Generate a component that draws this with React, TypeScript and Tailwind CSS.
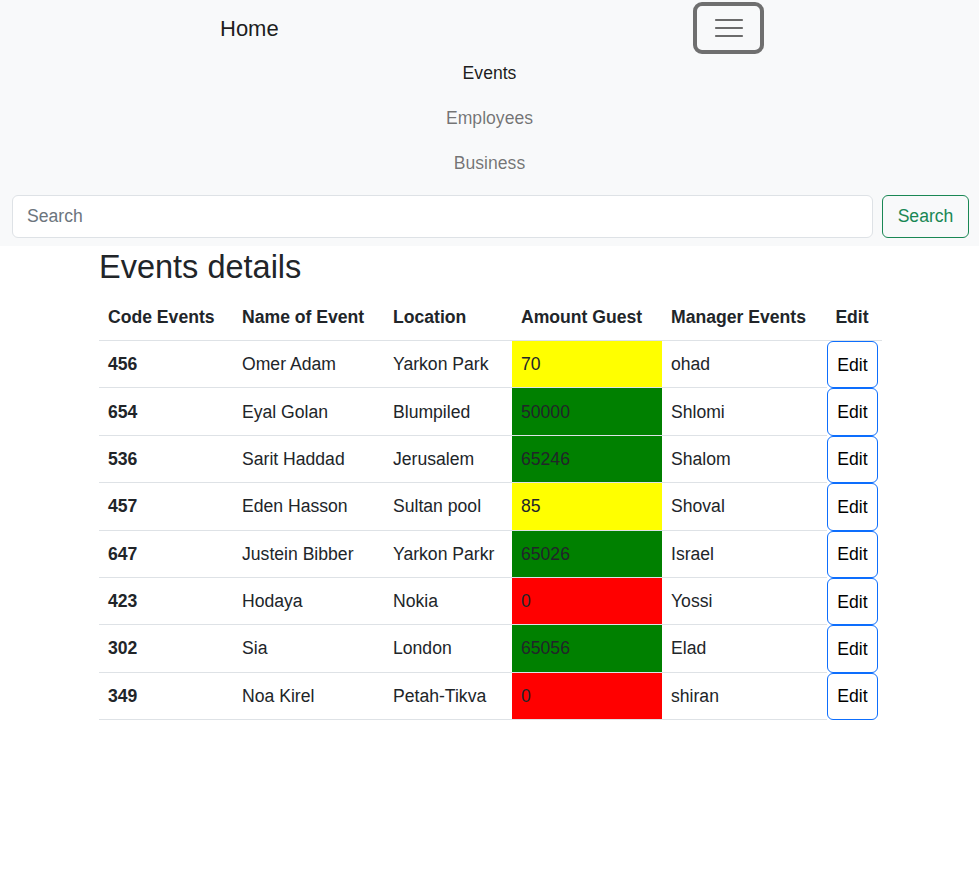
import React from "react";

const rows = [
  { code: "456", name: "Omer Adam", loc: "Yarkon Park", amount: "70", color: "bg-[#ffff00]", mgr: "ohad" },
  { code: "654", name: "Eyal Golan", loc: "Blumpiled", amount: "50000", color: "bg-[#008000]", mgr: "Shlomi" },
  { code: "536", name: "Sarit Haddad", loc: "Jerusalem", amount: "65246", color: "bg-[#008000]", mgr: "Shalom" },
  { code: "457", name: "Eden Hasson", loc: "Sultan pool", amount: "85", color: "bg-[#ffff00]", mgr: "Shoval" },
  { code: "647", name: "Justein Bibber", loc: "Yarkon Parkr", amount: "65026", color: "bg-[#008000]", mgr: "Israel" },
  { code: "423", name: "Hodaya", loc: "Nokia", amount: "0", color: "bg-[#ff0000]", mgr: "Yossi" },
  { code: "302", name: "Sia", loc: "London", amount: "65056", color: "bg-[#008000]", mgr: "Elad" },
  { code: "349", name: "Noa Kirel", loc: "Petah-Tikva", amount: "0", color: "bg-[#ff0000]", mgr: "shiran" },
];

const cols = ["w-[134px]", "w-[151px]", "w-[128px]", "w-[150px]", "w-[165px]"];

export default function App() {
  return (
    <div className="min-h-[889px] bg-white text-[#212529] font-['Liberation_Sans',Arial,sans-serif] text-[17.6px]">
      <nav className="bg-[#f8f9fa] pb-[8px]">
        <div className="flex items-center justify-between pl-[220px] pr-[215px] h-[56px]">
          <span className="text-[22px] text-[rgba(0,0,0,0.9)]">Home</span>
          <button className="w-[71px] h-[52px] mt-[2px] self-start rounded-[9px] border-[4px] border-[#6f6f6f] flex items-center justify-center">
            <svg width="30" height="24" viewBox="0 0 30 24">
              <path d="M2 4h26M2 12h26M2 20h26" stroke="#6b6b6b" strokeWidth="2.2" strokeLinecap="round" />
            </svg>
          </button>
        </div>
        <ul className="flex flex-col items-center">
          <li className="h-[45px] flex items-center text-[rgba(0,0,0,0.9)] -mt-[5px]">Events</li>
          <li className="h-[45px] flex items-center text-[rgba(0,0,0,0.55)]">Employees</li>
          <li className="h-[45px] flex items-center text-[rgba(0,0,0,0.55)]">Business</li>
        </ul>
        <div className="flex gap-[9px] pl-[12px] pr-[10px] mt-[9px]">
          <input
            placeholder="Search"
            className="flex-1 h-[43px] rounded-[6px] border border-[#dee2e6] bg-white px-[14px] text-[17.6px] placeholder:text-[#6c757d] outline-none"
          />
          <button className="w-[87px] h-[43px] rounded-[6px] border border-[#198754] text-[#198754] text-[17.6px]">Search</button>
        </div>
      </nav>
      <div className="pl-[99px] w-[882px]">
        <h2 className="text-[32.5px] leading-[40px] mt-[1px] mb-[8px]">Events details</h2>
        <div className="flex h-[46px] items-center font-bold border-b border-[#dee2e6]">
          {["Code Events", "Name of Event", "Location", "Amount Guest", "Manager Events"].map((h, i) => (
            <div key={h} className={`${cols[i]} px-[9px]`}>{h}</div>
          ))}
          <div className="flex-1 text-center pr-[5px]">Edit</div>
        </div>
        {rows.map((r) => (
          <div key={r.code} className="flex h-[47.375px] leading-[26px]">
            <div className={`${cols[0]} px-[9px] flex items-center font-bold border-b border-[#dee2e6]`}>{r.code}</div>
            <div className={`${cols[1]} px-[9px] flex items-center border-b border-[#dee2e6]`}>{r.name}</div>
            <div className={`${cols[2]} px-[9px] flex items-center border-b border-[#dee2e6]`}>{r.loc}</div>
            <div className={`${cols[3]} px-[9px] flex items-center border-b border-[#dee2e6] ${r.color}`}>{r.amount}</div>
            <div className={`${cols[4]} px-[9px] flex items-center border-b border-[#dee2e6]`}>{r.mgr}</div>
            <button className="w-[51px] h-full rounded-[6px] border border-[#0d6efd] bg-white text-black text-[17.6px]">Edit</button>
          </div>
        ))}
      </div>
    </div>
  );
}
